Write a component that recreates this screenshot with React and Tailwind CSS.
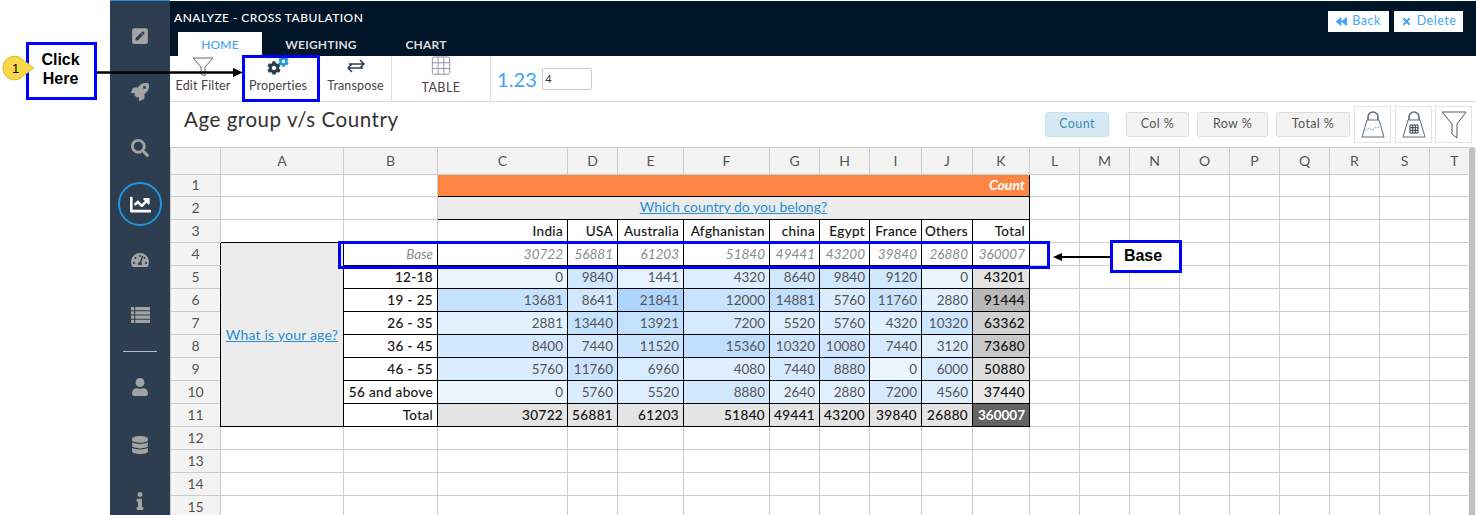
import React from "react";
import {
  FaBackward,
  FaChartLine,
  FaCog,
  FaDatabase,
  FaInfo,
  FaPenSquare,
  FaRocket,
  FaSearch,
  FaTachometerAlt,
  FaTimes,
  FaUser,
} from "react-icons/fa";

const FONT = "font-['Lato','Open_Sans',sans-serif]";

const COL_WIDTHS = [50, 123, 94, 130, 50, 66, 86, 50, 50, 52, 51, 57, 50, 50, 50, 50, 50, 50, 50, 50, 50];
const COL_NAMES = ["", "A", "B", "C", "D", "E", "F", "G", "H", "I", "J", "K", "L", "M", "N", "O", "P", "Q", "R", "S", "T"];
const COUNTRIES = ["India", "USA", "Australia", "Afghanistan", "china", "Egypt", "France", "Others", "Total"];
const BASE = [30722, 56881, 61203, 51840, 49441, 43200, 39840, 26880, 360007];
const ROWS = [
  ["12-18", [0, 9840, 1441, 4320, 8640, 9840, 9120, 0], 43201],
  ["19 - 25", [13681, 8641, 21841, 12000, 14881, 5760, 11760, 2880], 91444],
  ["26 - 35", [2881, 13440, 13921, 7200, 5520, 5760, 4320, 10320], 63362],
  ["36 - 45", [8400, 7440, 11520, 15360, 10320, 10080, 7440, 3120], 73680],
  ["46 - 55", [5760, 11760, 6960, 4080, 7440, 8880, 0, 6000], 50880],
  ["56 and above", [0, 5760, 5520, 8880, 2640, 2880, 7200, 4560], 37440],
];

const lerp = (a, b, t) => Math.round(a + (b - a) * t);
const blueFor = (v) => {
  const t = v / 21841;
  return `rgb(${lerp(234, 173, t)},${lerp(245, 213, t)},${lerp(255, 254, t)})`;
};
const grayFor = (v) => {
  const g = Math.round(233 - ((v - 37440) / 54004) * 49);
  return `rgb(${g},${g},${g})`;
};

const gridCell = "border border-[#cccccc] p-0";
const dataCell = "border border-black p-0 pr-[4px] text-right text-[13.5px] leading-[18px] whitespace-nowrap overflow-hidden";
const medium = "text-[#111] tracking-[0.35px] [-webkit-text-stroke:0.15px]";

function EmptyCells({ from }) {
  return COL_NAMES.slice(from).map((n) => <td key={n} className={gridCell} />);
}

function RowHead({ n, dark }) {
  return (
    <td className={`border border-[#cccccc] bg-[#f3f3f3] p-0 pb-[1px] text-center text-[14px] leading-[16px] text-[#555] ${dark ? "border-r-black" : ""}`}>
      {n}
    </td>
  );
}

function Sheet() {
  return (
    <table className={`table-fixed border-collapse w-[1309px] text-[#222] ${FONT}`}>
      <colgroup>
        {COL_WIDTHS.map((w, i) => (
          <col key={i} style={{ width: w }} />
        ))}
      </colgroup>
      <tbody>
        <tr className="h-[27px]">
          {COL_NAMES.map((n, i) => (
            <td key={i} className="border border-[#cccccc] bg-[#f3f3f3] p-0 text-center text-[14px] leading-[18px] text-[#555]">
              {n}
            </td>
          ))}
        </tr>
        <tr className="h-[22px]">
          <RowHead n={1} />
          <td className={gridCell} />
          <td className={gridCell} />
          <td colSpan={9} className="border border-black bg-[#fd8644] p-0 pb-[2px] pr-[4px] text-right text-[14px] leading-[16px] font-bold italic text-white">
            Count
          </td>
          <EmptyCells from={12} />
        </tr>
        <tr className="h-[23px]">
          <RowHead n={2} />
          <td className={gridCell} />
          <td className={gridCell} />
          <td colSpan={9} className="border border-black bg-[#ececec] p-0 pb-[2px] text-center text-[14px] leading-[18px] text-[#2a8dd4] underline">
            Which country do you belong?
          </td>
          <EmptyCells from={12} />
        </tr>
        <tr className="h-[23px]">
          <RowHead n={3} />
          <td className="border border-[#cccccc] border-b-black p-0" />
          <td className="border border-[#cccccc] border-b-black p-0" />
          {COUNTRIES.map((c) => (
            <td key={c} className={`${dataCell} ${medium}`}>
              {c}
            </td>
          ))}
          <EmptyCells from={12} />
        </tr>
        <tr className="h-[23px]">
          <RowHead n={4} dark />
          <td rowSpan={8} className="border border-black bg-[#ececec] p-0 text-center text-[14px] leading-[18px] tracking-[0.2px] text-[#2a8dd4] underline">
            What is your age?
          </td>
          <td className={`${dataCell} italic text-[#8a8a8a]`}>Base</td>
          {BASE.map((v, i) => (
            <td key={i} className={`${dataCell} italic text-[#8a8a8a]`}>
              {v}
            </td>
          ))}
          <EmptyCells from={12} />
        </tr>
        {ROWS.map(([label, vals, total], r) => (
          <tr key={label} className="h-[23px]">
            <RowHead n={r + 5} dark />
            <td className={`${dataCell} ${medium}`}>{label}</td>
            {vals.map((v, i) => (
              <td key={i} className={`${dataCell} text-[#555]`} style={{ backgroundColor: blueFor(v) }}>
                {v}
              </td>
            ))}
            <td className={`${dataCell} ${medium}`} style={{ backgroundColor: grayFor(total) }}>
              {total}
            </td>
            <EmptyCells from={12} />
          </tr>
        ))}
        <tr className="h-[23px]">
          <RowHead n={11} dark />
          <td className={`${dataCell} ${medium}`}>Total</td>
          {BASE.slice(0, 8).map((v, i) => (
            <td key={i} className={`${dataCell} ${medium} bg-[#e4e4e4]`}>
              {v}
            </td>
          ))}
          <td className={`${dataCell} bg-[#636363] font-bold text-white`}>360007</td>
          <EmptyCells from={12} />
        </tr>
        {[12, 13, 14, 15].map((n) => (
          <tr key={n} className="h-[23px]">
            <RowHead n={n} />
            <EmptyCells from={1} />
          </tr>
        ))}
      </tbody>
    </table>
  );
}

function SideIcon({ icon: Icon, size = 18 }) {
  return (
    <div className="flex h-[56px] shrink-0 items-center justify-center text-[#a3a3a3]">
      <Icon size={size} />
    </div>
  );
}

function ListIcon({ size }) {
  return (
    <svg width={size} height={size} viewBox="0 0 18 18" fill="currentColor">
      <path d="M0 2h3v3H0zM4 2h14v3H4zM0 6h3v3H0zM4 6h14v3H4zM0 10h3v3H0zM4 10h14v3H4zM0 14h3v3H0zM4 14h14v3H4z" />
    </svg>
  );
}

function Sidebar() {
  return (
    <div className="flex w-[60px] shrink-0 flex-col overflow-hidden border-t border-t-[#2196e8] bg-[#2c3e50] pt-[7px]">
      <SideIcon icon={FaPenSquare} />
      <SideIcon icon={FaRocket} />
      <SideIcon icon={FaSearch} />
      <div className="flex h-[56px] shrink-0 items-center justify-center">
        <div className="flex h-[44px] w-[44px] items-center justify-center rounded-full border-2 border-[#2196e8] text-white">
          <FaChartLine size={21} />
        </div>
      </div>
      <SideIcon icon={FaTachometerAlt} />
      <div className="mt-[-2px] flex h-[56px] shrink-0 items-center justify-center text-[#a3a3a3]">
        <ListIcon size={19} />
      </div>
      <div className="mx-[13px] mt-[9px] h-px shrink-0 bg-[#b4bcc4]" />
      <div className="h-[7px] shrink-0" />
      <SideIcon icon={FaUser} />
      <div className="h-[2px] shrink-0" />
      <SideIcon icon={FaDatabase} />
      <SideIcon icon={FaInfo} />
    </div>
  );
}

function Header() {
  return (
    <div className="relative h-[56px] shrink-0 border-t border-t-white bg-[#001528] text-white">
      <div className="flex items-start justify-between pl-[4px] pr-[13px]">
        <div className="pt-[8px] text-[12px] font-medium tracking-[0.45px]">ANALYZE - CROSS TABULATION</div>
        <div className="flex gap-[5px] pt-[10px] text-[12.5px] tracking-[0.5px] text-[#42a5f5]">
          <div className="flex h-[21px] w-[61px] items-center justify-center gap-[5px] bg-white">
            <FaBackward size={11} />
            Back
          </div>
          <div className="flex h-[21px] w-[69px] items-center justify-center gap-[5px] bg-white">
            <FaTimes size={11} />
            Delete
          </div>
        </div>
      </div>
      <div className="absolute bottom-0 left-[8px] flex h-[24px] text-[12px] font-bold tracking-[0.2px]">
        <div className="flex w-[84px] items-center justify-center bg-white pt-[2px] font-medium text-[#42a5f5]">HOME</div>
        <div className="flex w-[118px] items-center justify-center pt-[2px] text-[#ddd]">WEIGHTING</div>
        <div className="flex w-[92px] items-center justify-center pt-[2px] text-[#ddd]">CHART</div>
      </div>
    </div>
  );
}

function Toolbar() {
  return (
    <div className="flex h-[46px] shrink-0 border-b border-b-[#dddddd] text-[12.5px] tracking-[0.15px] text-[#444]">
      <div className="flex w-[66px] flex-col items-center justify-end pb-[5px]">
        <svg width="22" height="22" viewBox="0 0 22 22" fill="none" stroke="#666" strokeWidth="1" className="mb-[-1px]">
          <path d="M1 2h20l-8 9v9l-4-2v-7z" />
        </svg>
        <span>Edit Filter</span>
      </div>
      <div className="flex w-[84px] flex-col items-center justify-end pb-[5px]">
        <div className="mb-[2px] flex h-[20px] items-end">
          <FaCog size={14} className="text-[#2b3e50]" />
          <FaCog size={11} className="mb-[8px] ml-[-3px] text-[#1f9bd1]" />
        </div>
        <span>Properties</span>
      </div>
      <div className="flex w-[72px] flex-col items-center justify-end border-r border-r-[#dddddd] pb-[5px]">
        <svg width="18" height="14" viewBox="0 0 18 14" fill="none" stroke="#2c3e50" strokeWidth="1.5" className="mb-[4px]">
          <path d="M2 5h15M13 1l4 4-4 4M1 9h15M5 5L1 9l4 4" />
        </svg>
        <span>Transpose</span>
      </div>
      <div className="flex w-[99px] flex-col items-center justify-end border-r border-r-[#dddddd] pb-[3px]">
        <svg width="20" height="20" viewBox="0 0 20 20" fill="none" stroke="#8a94a0" strokeWidth="1" className="mb-[4px]">
          <rect x="1" y="1" width="18" height="18" rx="2" />
          <path d="M7 1v18M13 1v18M1 7h18M1 13h18" />
        </svg>
        <span className="tracking-[0.5px]">TABLE</span>
      </div>
      <div className="flex items-center pl-[6px]">
        <span className="text-[20px] text-[#42a5f5]">1.23</span>
        <input
          readOnly
          value="4"
          className="ml-[5px] h-[22px] w-[50px] rounded-[2px] border border-[#cccccc] pl-[2px] text-[11px] text-[#333]"
        />
      </div>
    </div>
  );
}

function Weight({ line }) {
  return (
    <svg width="24" height="27" viewBox="0 0 24 27" fill="none" stroke="#5a6b7c" strokeWidth="1">
      <path d="M7 9V6a5 5 0 0 1 10 0v3" stroke="#5a6b7c" strokeWidth="1.6" />
      <path d="M6 9h12l5 17H1z" />
      {line ? (
        <path d="M4 20l4-3 3 2 4-3 2 1 3-3" stroke="#59b7e6" strokeDasharray="2 1" />
      ) : (
        <path d="M8 14h8v8H8zM8 16.700h8M8 19.300h8M10.700 14v8M13.300 14v8" stroke="#2c3e50" />
      )}
    </svg>
  );
}

function TitleRow() {
  const btn = "flex h-[25px] items-center justify-center rounded-[3px] border text-[12.5px] tracking-[0.4px]";
  const plain = `${btn} border-[#dddddd] bg-[#f3f3f3] text-[#555]`;
  const box = "flex h-[37px] w-[37px] items-center justify-center border border-[#e4e4e4]";
  return (
    <div className="flex h-[45px] shrink-0 items-start justify-between pl-[14px] pr-[4px]">
      <div className="pt-[2px] text-[20.5px] tracking-[0.55px] text-[#333]">Age group v/s Country</div>
      <div className="flex items-center pt-[4px]">
        <div className={`${btn} mr-[17px] w-[64px] border-[#c6e0ee] bg-[#d4e9f4] text-[#3d8bb0]`}>Count</div>
        <div className={`${plain} mr-[8px] w-[63px]`}>Col %</div>
        <div className={`${plain} mr-[8px] w-[71px]`}>Row %</div>
        <div className={`${plain} mr-[4px] w-[74px]`}>Total %</div>
        <div className={`${box} mr-[4px]`}>
          <Weight line />
        </div>
        <div className={`${box} mr-[3px]`}>
          <Weight />
        </div>
        <div className={box}>
          <svg width="26" height="28" viewBox="0 0 26 28" fill="none" stroke="#4a5a6a" strokeWidth="1">
            <path d="M1 1h24L16 13v14l-5-4V13z" />
          </svg>
        </div>
      </div>
    </div>
  );
}

function Annotations() {
  const blueBox = "absolute border-[3px] border-[#0000ff]";
  const label = "font-['Liberation_Sans',Arial,sans-serif] font-bold text-black";
  return (
    <>
      <div className={`${blueBox} ${label} left-[26px] top-[42px] h-[58px] w-[71px] bg-white pr-[2px] pt-[5px] text-center text-[16px] leading-[19px]`}>
        Click
        <br />
        Here
      </div>
      <svg className="absolute left-0 top-[53px]" width="40" height="30" viewBox="0 0 40 30">
        <path d="M3 15a11.500 11.500 0 0 1 20-8l11 8-11 8a11.500 11.500 0 0 1-20-8z" fill="#fbd84a" stroke="#d9b93a" />
      </svg>
      <div className={`${label} absolute left-[12px] top-[59px] text-[13px] font-normal`}>1</div>
      <svg className="absolute left-[97px] top-[67px]" width="146" height="12" viewBox="0 0 146 12">
        <path d="M0 5.500h138" stroke="#000" strokeWidth="2.500" />
        <path d="M136 1l10 4.500-10 4.500z" fill="#000" />
      </svg>
      <div className={`${blueBox} left-[242px] top-[55px] h-[47px] w-[78px]`} />
      <div className={`${blueBox} left-[338px] top-[241px] h-[28px] w-[712px]`} />
      <svg className="absolute left-[1053px] top-[251px]" width="58" height="12" viewBox="0 0 58 12">
        <path d="M6 6h52" stroke="#000" strokeWidth="2" />
        <path d="M9 2L0 6l9 4z" fill="#000" />
      </svg>
      <div className={`${blueBox} ${label} left-[1110px] top-[240px] flex h-[33px] w-[72px] items-center justify-center bg-white pb-[2px] pr-[6px] text-[16px]`}>
        Base
      </div>
    </>
  );
}

export default function App() {
  return (
    <div className={`relative flex h-[515px] w-[1476px] overflow-hidden bg-white pl-[110px] ${FONT}`}>
      <Sidebar />
      <div className="flex min-w-0 flex-1 flex-col">
        <Header />
        <Toolbar />
        <TitleRow />
        <div className="relative min-h-0 flex-1 overflow-hidden">
          <Sheet />
          <div className="absolute right-0 top-0 h-full w-[8px] bg-[#f1f1f1]">
            <div className="ml-[1px] h-full w-[6px] rounded-t-[3px] bg-[#c1c1c1]" />
          </div>
        </div>
      </div>
      <Annotations />
    </div>
  );
}
